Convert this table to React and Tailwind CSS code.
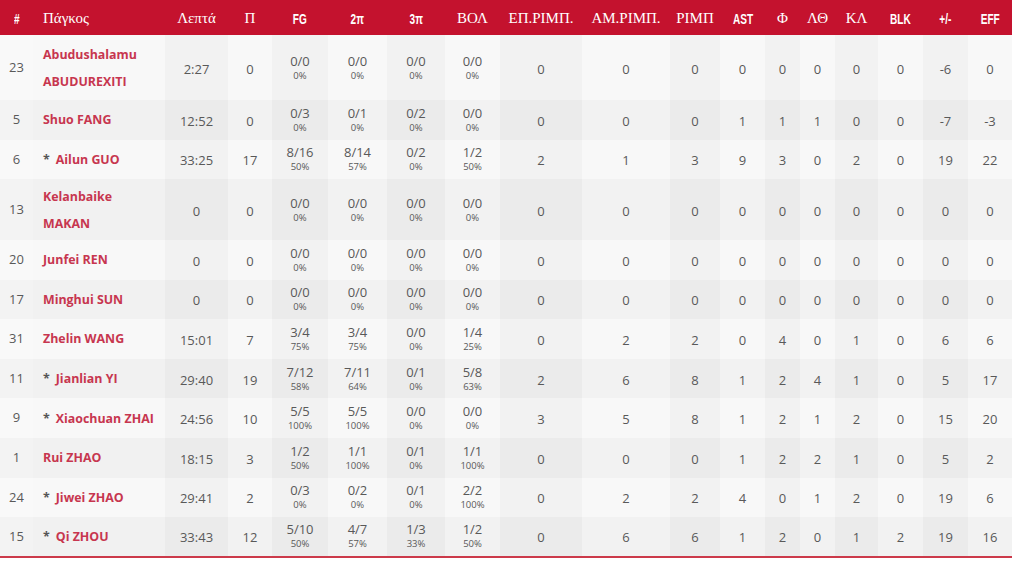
import React from 'react'

const cols = [
  { label: '#', w: 33, kind: 'sans' },
  { label: 'Πάγκος', w: 132, kind: 'serif', left: true },
  { label: 'Λεπτά', w: 63, kind: 'serif', dark: true },
  { label: 'Π', w: 44, kind: 'serif' },
  { label: 'FG', w: 56, kind: 'sans', dark: true },
  { label: '2π', w: 59, kind: 'sans' },
  { label: '3π', w: 58, kind: 'sans', dark: true },
  { label: 'ΒΟΛ', w: 55, kind: 'serif' },
  { label: 'ΕΠ.ΡΙΜΠ.', w: 82, kind: 'serif', dark: true },
  { label: 'ΑΜ.ΡΙΜΠ.', w: 88, kind: 'serif' },
  { label: 'ΡΙΜΠ', w: 50, kind: 'serif', dark: true },
  { label: 'AST', w: 45, kind: 'sans' },
  { label: 'Φ', w: 35, kind: 'serif', dark: true },
  { label: 'ΛΘ', w: 35, kind: 'serif' },
  { label: 'ΚΛ', w: 43, kind: 'serif', dark: true },
  { label: 'BLK', w: 45, kind: 'sans' },
  { label: '+/-', w: 45, kind: 'sans', dark: true },
  { label: 'EFF', w: 44, kind: 'sans' },
]

// [#, name lines, starter, min, pts, fg, 2p, 3p, ft, oreb, dreb, reb, ast, pf, to, st, blk, +/-, eff]
const players = [
  ['23', ['Abudushalamu', 'ABUDUREXITI'], false, '2:27', '0', ['0/0', '0%'], ['0/0', '0%'], ['0/0', '0%'], ['0/0', '0%'], '0', '0', '0', '0', '0', '0', '0', '0', '-6', '0'],
  ['5', ['Shuo FANG'], false, '12:52', '0', ['0/3', '0%'], ['0/1', '0%'], ['0/2', '0%'], ['0/0', '0%'], '0', '0', '0', '1', '1', '1', '0', '0', '-7', '-3'],
  ['6', ['Ailun GUO'], true, '33:25', '17', ['8/16', '50%'], ['8/14', '57%'], ['0/2', '0%'], ['1/2', '50%'], '2', '1', '3', '9', '3', '0', '2', '0', '19', '22'],
  ['13', ['Kelanbaike', 'MAKAN'], false, '0', '0', ['0/0', '0%'], ['0/0', '0%'], ['0/0', '0%'], ['0/0', '0%'], '0', '0', '0', '0', '0', '0', '0', '0', '0', '0'],
  ['20', ['Junfei REN'], false, '0', '0', ['0/0', '0%'], ['0/0', '0%'], ['0/0', '0%'], ['0/0', '0%'], '0', '0', '0', '0', '0', '0', '0', '0', '0', '0'],
  ['17', ['Minghui SUN'], false, '0', '0', ['0/0', '0%'], ['0/0', '0%'], ['0/0', '0%'], ['0/0', '0%'], '0', '0', '0', '0', '0', '0', '0', '0', '0', '0'],
  ['31', ['Zhelin WANG'], false, '15:01', '7', ['3/4', '75%'], ['3/4', '75%'], ['0/0', '0%'], ['1/4', '25%'], '0', '2', '2', '0', '4', '0', '1', '0', '6', '6'],
  ['11', ['Jianlian YI'], true, '29:40', '19', ['7/12', '58%'], ['7/11', '64%'], ['0/1', '0%'], ['5/8', '63%'], '2', '6', '8', '1', '2', '4', '1', '0', '5', '17'],
  ['9', ['Xiaochuan ZHAI'], true, '24:56', '10', ['5/5', '100%'], ['5/5', '100%'], ['0/0', '0%'], ['0/0', '0%'], '3', '5', '8', '1', '2', '1', '2', '0', '15', '20'],
  ['1', ['Rui ZHAO'], false, '18:15', '3', ['1/2', '50%'], ['1/1', '100%'], ['0/1', '0%'], ['1/1', '100%'], '0', '0', '0', '1', '2', '2', '1', '0', '5', '2'],
  ['24', ['Jiwei ZHAO'], true, '29:41', '2', ['0/3', '0%'], ['0/2', '0%'], ['0/1', '0%'], ['2/2', '100%'], '0', '2', '2', '4', '0', '1', '2', '0', '19', '6'],
  ['15', ['Qi ZHOU'], true, '33:43', '12', ['5/10', '50%'], ['4/7', '57%'], ['1/3', '33%'], ['1/2', '50%'], '0', '6', '6', '1', '2', '0', '1', '2', '19', '16'],
]

const rowHeights = ['h-[65px]', 'h-[39.5px]', 'h-[39.5px]', 'h-[61px]']

const HeadCell = ({ col }) => (
  <th className={`h-[35px] p-0 font-normal text-white ${col.left ? 'text-left pl-[10px]' : 'text-center'}`}>
    {col.kind === 'serif' ? (
      <span className="font-['Liberation_Serif',serif] text-[15px]">{col.label}</span>
    ) : (
      <span className="inline-block scale-x-[0.72] font-['Liberation_Sans',sans-serif] text-[14px] font-bold">
        {col.label}
      </span>
    )}
  </th>
)

const App = () => {
  return (
    <div className="w-[1024px] h-[561px] bg-white overflow-hidden font-['Open_Sans',sans-serif]">
      <table className="w-[1012px] table-fixed border-collapse border-b-2 border-[#cc3a4a]">
        <colgroup>
          {cols.map((c, i) => (
            <col key={i} style={{ width: c.w }} />
          ))}
        </colgroup>
        <thead>
          <tr className="bg-[#c4122e]">
            {cols.map((c, i) => (
              <HeadCell key={i} col={c} />
            ))}
          </tr>
        </thead>
        <tbody>
          {players.map((p, r) => {
            const [num, name, starter, ...stats] = p
            const odd = r % 2 === 0
            return (
              <tr key={r} className={rowHeights[r] || 'h-[39.6px]'}>
                <td className={`p-0 text-center text-[13px] text-[#595959] ${odd ? 'bg-[#f9f9f9]' : 'bg-[#f3f3f3]'}`}>{num}</td>
                <td className={`p-0 pl-[10px] text-left ${odd ? 'bg-[#f8f8f8]' : 'bg-[#f1f1f1]'}`}>
                  <div className="text-[12.4px] font-bold leading-[27px] text-[#c7364f]">
                    {starter && <span className="text-[#555] font-bold mr-[6px]">*</span>}
                    {name.map((n, k) => (
                      <div key={k} className={starter ? 'inline' : ''}>{n}</div>
                    ))}
                  </div>
                </td>
                {stats.map((s, k) => {
                  const col = cols[k + 2]
                  const bg = col.dark
                    ? odd ? 'bg-[#f2f2f2]' : 'bg-[#ebebeb]'
                    : odd ? 'bg-[#f8f8f8]' : 'bg-[#f2f2f2]'
                  return (
                    <td key={k} className={`p-0 text-center text-[#595959] ${bg}`}>
                      {Array.isArray(s) ? (
                        <div className="flex flex-col items-center">
                          <span className="text-[13px] leading-[15px]">{s[0]}</span>
                          <span className="text-[9.5px] leading-[13px]">{s[1]}</span>
                        </div>
                      ) : (
                        <span className="text-[13px]">{s}</span>
                      )}
                    </td>
                  )
                })}
              </tr>
            )
          })}
        </tbody>
      </table>
    </div>
  )
}

export default App
